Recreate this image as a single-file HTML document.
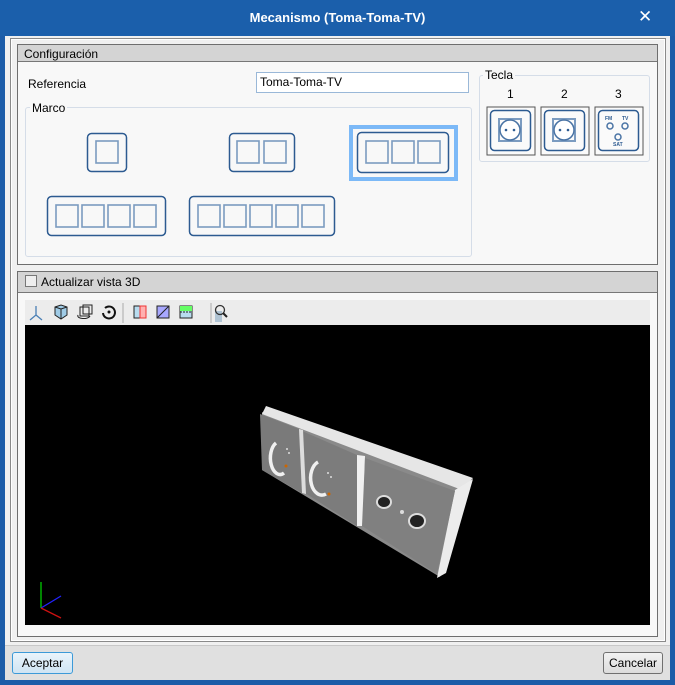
<!DOCTYPE html>
<html><head><meta charset="utf-8"><style>
*{margin:0;padding:0;box-sizing:border-box}
body{width:675px;height:685px;background:#1c5ca8;font-family:"Liberation Sans",sans-serif;font-size:12px;color:#000;position:relative;overflow:hidden}
.a{position:absolute}
</style></head><body>
<div class="a" style="left:0;top:0;width:675px;height:36px;background:#1b5fab"></div>
<div class="a" style="left:0;top:10px;width:675px;text-align:center;color:#fff;font-weight:bold;font-size:13px">Mecanismo (Toma-Toma-TV)</div>
<div class="a" style="left:638px;top:7px;color:#fff;font-size:17px">✕</div>
<div class="a" style="left:5px;top:36px;width:665px;height:644px;background:#f0f0f0"></div>
<div class="a" style="left:10px;top:38px;width:656px;height:604px;border:1px solid #8a8a8a;background:#fff"></div>
<div class="a" style="left:12px;top:40px;width:652px;height:600px;background:#f0f0f0"></div>
<div class="a" style="left:17px;top:44px;width:641px;height:221px;border:1px solid #6e6e6e;background:#f8f8f8"></div>
<div class="a" style="left:18px;top:45px;width:639px;height:17px;background:#d4d4d4;border-bottom:1px solid #777"></div>
<div class="a" style="left:24px;top:47px">Configuración</div>
<div class="a" style="left:28px;top:77px">Referencia</div>
<div class="a" style="left:256px;top:72px;width:213px;height:21px;border:1px solid #9ab8d8;background:#fff;padding:2px 3px">Toma-Toma-TV</div>
<div class="a" style="left:25px;top:107px;width:447px;height:150px;border:1px solid #d5dde8;border-radius:3px"></div>
<div class="a" style="left:30px;top:101px;background:#f8f8f8;padding:0 2px">Marco</div>
<div class="a" style="left:479px;top:75px;width:171px;height:87px;border:1px solid #d5dde8;border-radius:3px"></div>
<div class="a" style="left:483px;top:68px;background:#f8f8f8;padding:0 2px">Tecla</div>
<div class="a" style="left:507px;top:87px">1</div>
<div class="a" style="left:561px;top:87px">2</div>
<div class="a" style="left:615px;top:87px">3</div>
<div class="a" style="left:349px;top:125px;width:109px;height:56px;border:4px solid #7cb9f7"></div>
<svg class="a" style="left:0;top:0" width="675" height="300" fill="none">
<g stroke="#2d5b91" stroke-width="1.5">
<rect x="87.5" y="133.5" width="39" height="38" rx="4"/>
<rect x="229.5" y="133.5" width="65" height="38" rx="4"/>
<rect x="357.5" y="132.5" width="91" height="40" rx="4"/>
<rect x="47.5" y="196.5" width="118" height="39" rx="4"/>
<rect x="189.5" y="196.5" width="145" height="39" rx="4"/>
</g>
<g stroke="#7b9bc0" stroke-width="1.6">
<rect x="96" y="141" width="22" height="22"/>
<rect x="237" y="141" width="22" height="22"/><rect x="264" y="141" width="22" height="22"/>
<rect x="366" y="141" width="22" height="22"/><rect x="392" y="141" width="22" height="22"/><rect x="418" y="141" width="22" height="22"/>
<rect x="56" y="205" width="22" height="22"/><rect x="82" y="205" width="22" height="22"/><rect x="108" y="205" width="22" height="22"/><rect x="134" y="205" width="22" height="22"/>
<rect x="198" y="205" width="22" height="22"/><rect x="224" y="205" width="22" height="22"/><rect x="250" y="205" width="22" height="22"/><rect x="276" y="205" width="22" height="22"/><rect x="302" y="205" width="22" height="22"/>
</g>
<g>
<rect x="487" y="107" width="48" height="48" fill="#fafafa" stroke="#555"/>
<rect x="541" y="107" width="48" height="48" fill="#fafafa" stroke="#555"/>
<rect x="595" y="107" width="48" height="48" fill="#fafafa" stroke="#555"/>
<g stroke="#2d5b91" stroke-width="1.5">
<rect x="490.5" y="110.5" width="40" height="40" rx="4"/><rect x="544.5" y="110.5" width="40" height="40" rx="4"/><rect x="598.5" y="110.5" width="40" height="40" rx="4"/>
</g>
<g stroke="#7b9bc0" stroke-width="2"><rect x="499" y="119" width="22" height="22"/><rect x="553" y="119" width="22" height="22"/></g>
<circle cx="510" cy="130" r="10" fill="#fff" stroke="#4a74a5" stroke-width="1.5"/><circle cx="564" cy="130" r="10" fill="#fff" stroke="#4a74a5" stroke-width="1.5"/>
<g fill="#2d5b91"><circle cx="506" cy="130" r="1.3"/><circle cx="514" cy="130" r="1.3"/><circle cx="560" cy="130" r="1.3"/><circle cx="568" cy="130" r="1.3"/></g>
<g stroke="#4a74a5" stroke-width="1.5"><circle cx="610" cy="126" r="3"/><circle cx="625" cy="126" r="3"/><circle cx="618" cy="137" r="3"/></g>
<g fill="#2d5b91" font-size="5" font-family="Liberation Sans" font-weight="bold"><text x="605" y="120">FM</text><text x="622" y="120">TV</text><text x="613" y="146">SAT</text></g>
</g>
</svg>
<div class="a" style="left:17px;top:271px;width:641px;height:366px;border:1px solid #6e6e6e;background:#f8f8f8"></div>
<div class="a" style="left:18px;top:272px;width:639px;height:21px;background:#d4d4d4;border-bottom:1px solid #777"></div>
<div class="a" style="left:25px;top:275px;width:12px;height:12px;border:1px solid #777;background:#eee"></div>
<div class="a" style="left:41px;top:275px">Actualizar vista 3D</div>
<div class="a" style="left:25px;top:300px;width:625px;height:25px;background:#ececec"></div>
<svg class="a" style="left:25px;top:300px" width="220" height="25" fill="none">
<path d="M11 6v9l-6 5M11 15l6 5" stroke="#4a7fb5" stroke-width="1.3"/>
<path d="M30 7l6-2 6 2v8l-6 4-6-4z" fill="#9fcbe6" stroke="#222"/><path d="M30 7l6 2 6-2M36 9v10" stroke="#222"/>
<rect x="55" y="7" width="9" height="9" stroke="#222"/><rect x="58" y="5" width="9" height="9" stroke="#222"/><path d="M53 15c-2 4 10 5 12 1" stroke="#222"/>
<path d="M80 8a6 6 0 1 1-2 5" stroke="#111" stroke-width="2"/><circle cx="84" cy="12" r="1.5" fill="#111"/>
<path d="M98 3v20M186 3v20" stroke="#aaa"/>
<rect x="109" y="6" width="12" height="12" fill="#b8dcef" stroke="#222"/><rect x="115" y="6" width="6" height="12" fill="#ffb0b0" stroke="#e33"/>
<rect x="132" y="6" width="12" height="12" fill="#a8a8ff" stroke="#222"/><path d="M132 18l12-12" stroke="#222"/>
<rect x="155" y="6" width="12" height="12" fill="#b8dcef" stroke="#222"/><rect x="155" y="6" width="12" height="5" fill="#6f6"/><path d="M155 12h12" stroke="#222" stroke-dasharray="2 1"/>
<rect x="190" y="11" width="7" height="11" fill="#b0c4d4"/><circle cx="195" cy="10" r="4.5" stroke="#333" stroke-width="1.3"/><path d="M198 13l4 4" stroke="#222" stroke-width="2"/>
</svg>
<div class="a" style="left:25px;top:325px;width:625px;height:300px;background:#000"></div>
<svg class="a" style="left:0;top:0" width="675" height="685">
<polygon points="262,412 465,484 440,577 262,470" fill="#8a8a8a"/>
<polygon points="266,406 473,478 462,490 262,414" fill="#e6e6e6"/>
<polygon points="455,490 473,479 446,573 437,578" fill="#ececec"/>
<polygon points="260,414 299,429 302,493 262,470" fill="#7a7a7a"/>
<polygon points="302,431 357,455 357,526 305,493" fill="#7c7c7c"/>
<polygon points="299,429 303,430 306,494 302,493" fill="#ddd"/>
<polygon points="357,455 365,456 363,526 357,526" fill="#f0f0f0"/>
<polygon points="365,458 455,491 437,574 362,526" fill="#808080"/>
<path d="M276 443a7 12 0 0 0 8 30" stroke="#f0f0f0" stroke-width="3.5" fill="none"/>
<path d="M318 462a8 12 0 0 0 8 32" stroke="#f0f0f0" stroke-width="3.5" fill="none"/>
<circle cx="286" cy="466" r="1.5" fill="#c60"/><circle cx="329" cy="494" r="1.5" fill="#c60"/>
<g fill="#ddd"><circle cx="287" cy="449" r="1"/><circle cx="289" cy="453" r="1"/><circle cx="328" cy="473" r="1"/><circle cx="331" cy="477" r="1"/></g>
<ellipse cx="384" cy="502" rx="7" ry="6" fill="#222" stroke="#ddd" stroke-width="2"/>
<ellipse cx="417" cy="521" rx="8" ry="7" fill="#222" stroke="#ddd" stroke-width="2"/>
<circle cx="402" cy="512" r="2" fill="#ddd"/>
<path d="M41 608v-26" stroke="#0c0" stroke-width="1.3"/><path d="M41 608l20-12" stroke="#22f" stroke-width="1.3"/><path d="M41 608l20 10" stroke="#c11" stroke-width="1.3"/>
</svg>
<div class="a" style="left:5px;top:645px;width:665px;height:35px;background:#e0e0e0;border-top:1px solid #c8c8c8"></div>
<div class="a" style="left:12px;top:652px;width:61px;height:22px;border:1px solid #3c9ad8;border-radius:3px;background:linear-gradient(#eaf4fb,#cfe4f3);text-align:center;line-height:20px">Aceptar</div>
<div class="a" style="left:603px;top:652px;width:60px;height:22px;border:1px solid #707070;border-radius:3px;background:linear-gradient(#f2f2f2,#dcdcdc);text-align:center;line-height:20px">Cancelar</div>
</body></html>
